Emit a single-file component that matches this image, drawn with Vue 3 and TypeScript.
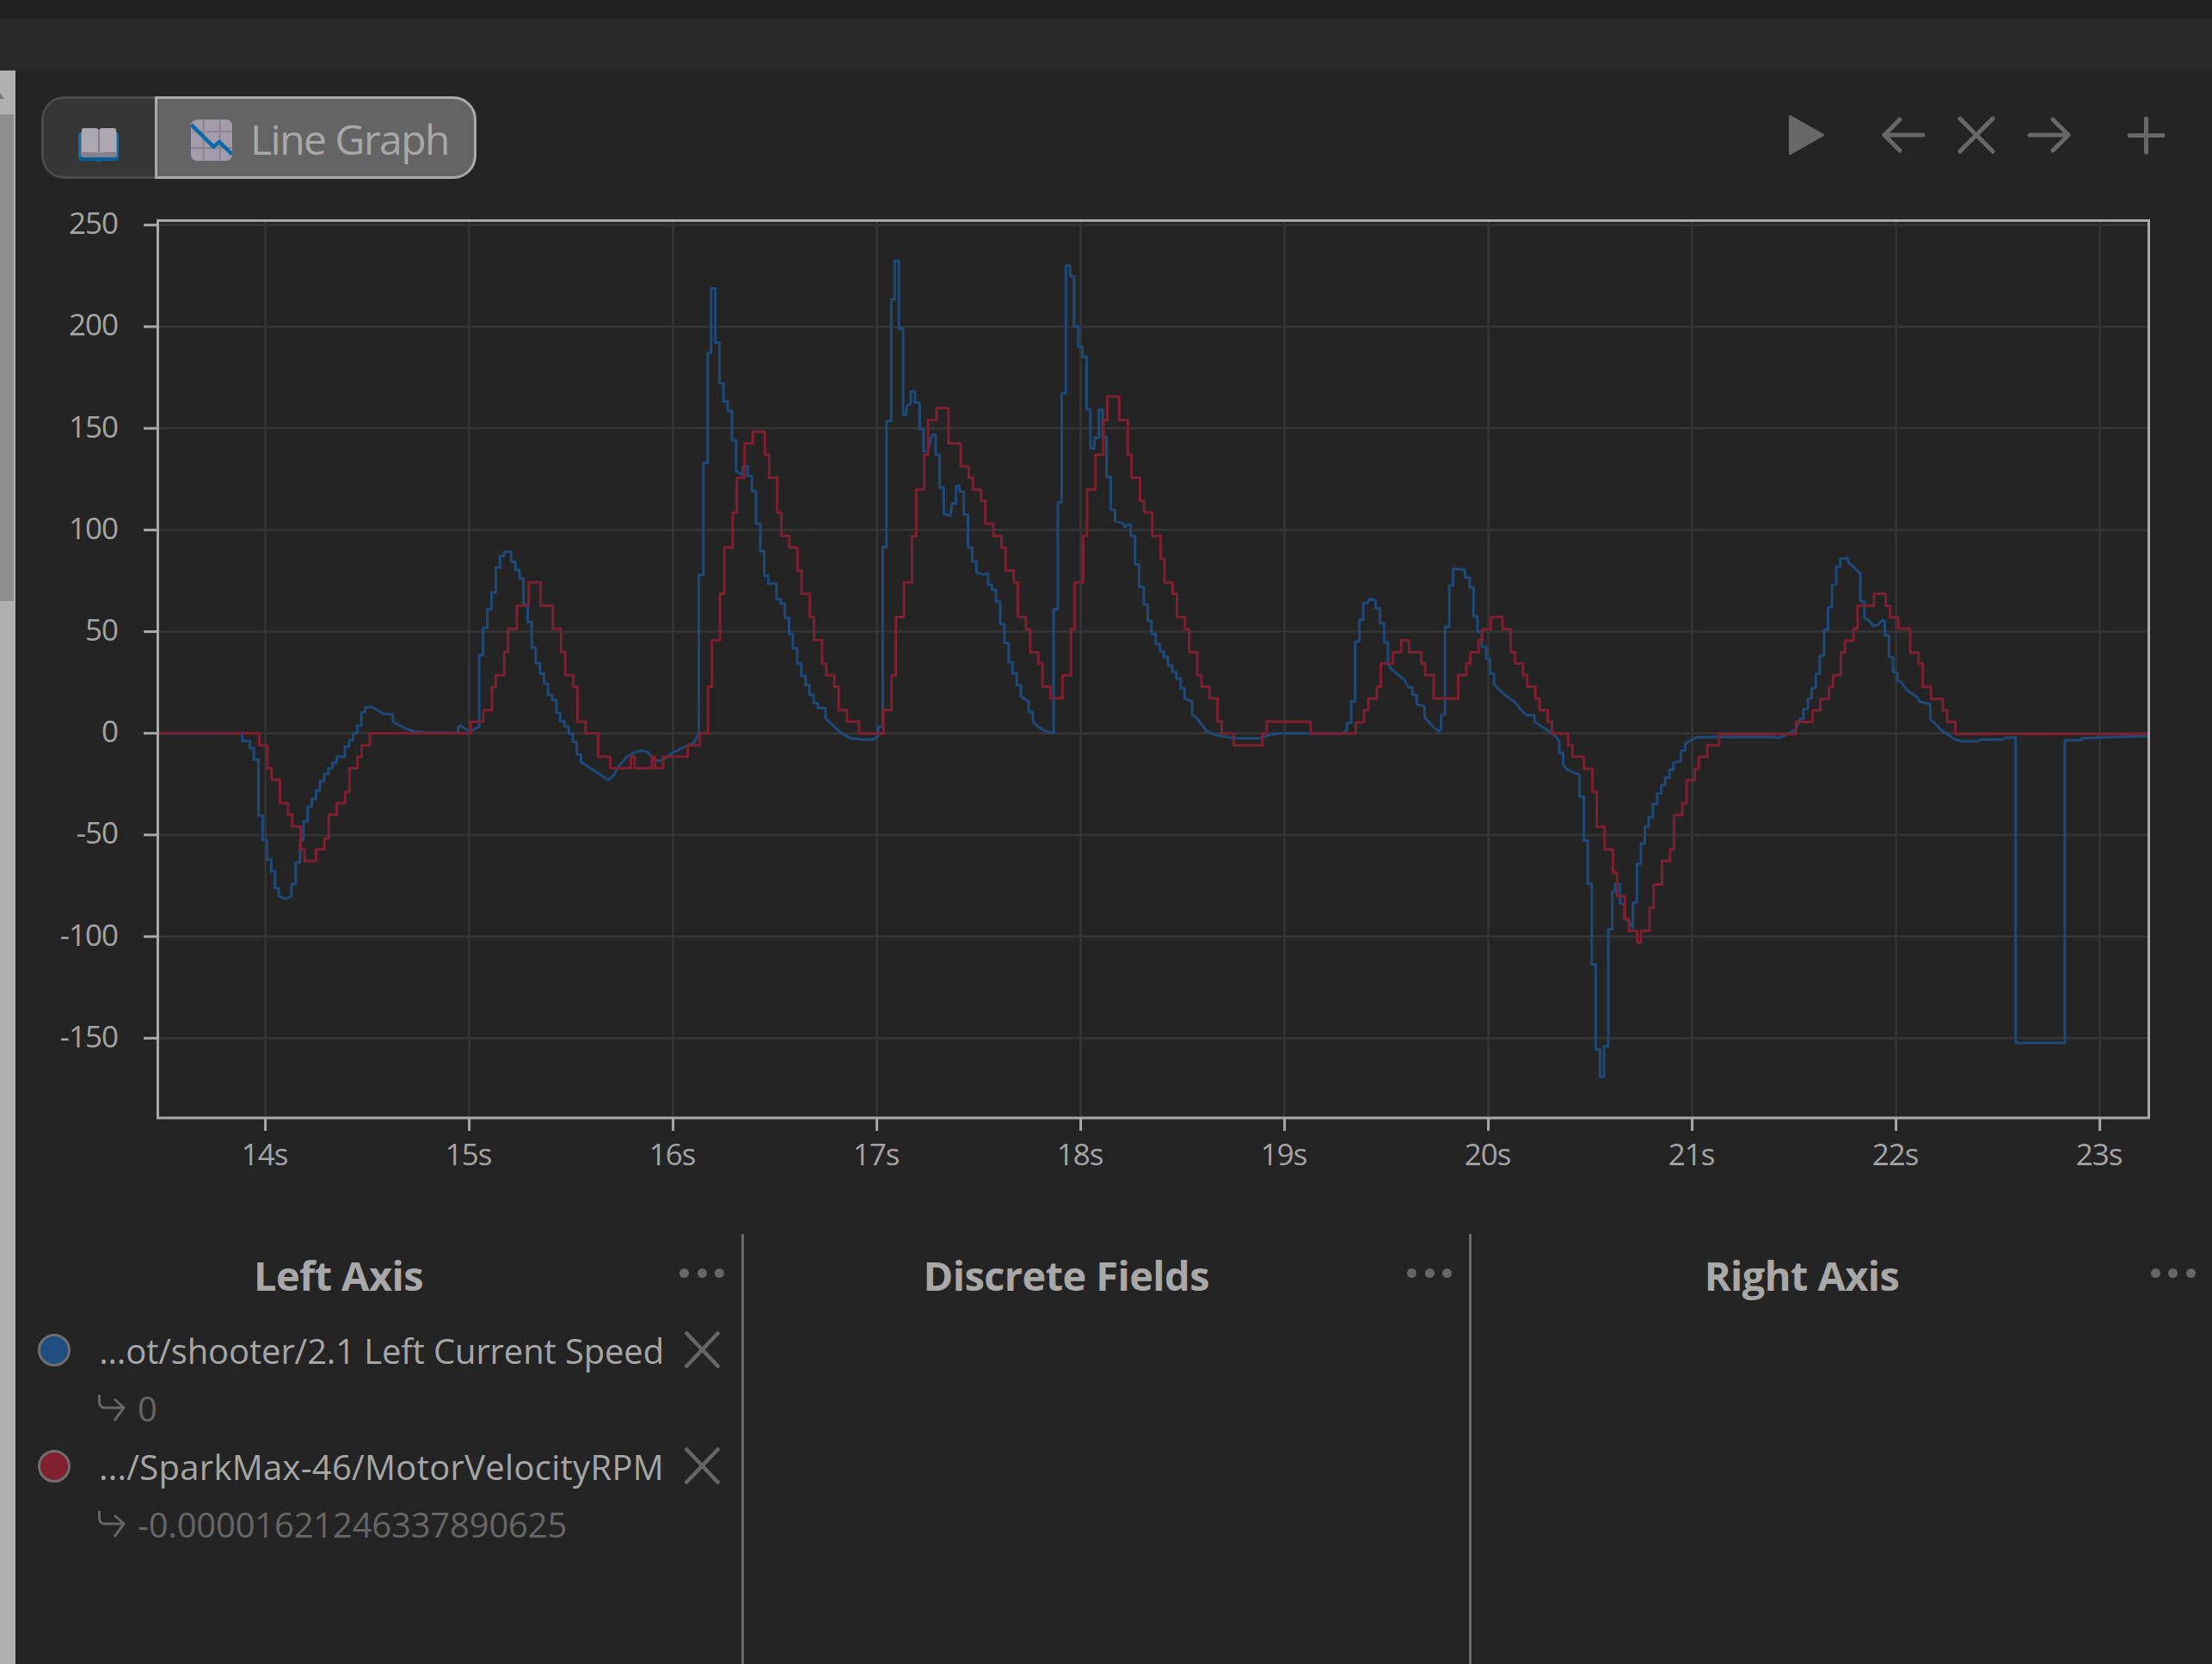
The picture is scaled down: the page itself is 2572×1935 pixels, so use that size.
<script setup lang="ts">
interface Section {
  x0: number
  y0: number
  sx: number
  sy: number
  pts: number[]
}

interface Series {
  name: string
  value: string
  color: string
  tracking: string
}

// traced in four windows, each with its own scale, so the numbers stay readable
const windows = {
  a: { x0: 180, y0: 640, sx: 2.24, sy: 3 },
  b: { x0: 780, y0: 280, sx: 2.24, sy: 2.613 },
  c: { x0: 1480, y0: 640, sx: 2.613, sy: 2.45 },
  d: { x0: 2000, y0: 620, sx: 2.741, sy: 2.45 }
}

const blueSections: Section[] = [
  { ...windows.a, pts: [10,638, 228,638, 228,665, 248,665, 248,690, 258,690, 258,730, 270,730, 270,925, 281,925, 281,1010, 292,1010, 292,1078, 303,1078, 303,1120, 313,1120, 313,1178, 323,1178, 323,1205, 340,1217, 356,1205, 356,1165, 367,1165, 367,1090, 378,1090, 378,1010, 387,1010, 387,945, 398,945, 398,895, 409,895, 409,868, 420,868, 420,838, 430,838, 430,805, 441,805, 441,780, 452,780, 452,760, 463,760, 463,740, 474,740, 474,720, 495,720, 495,685, 506,685, 506,662, 516,662, 516,638, 527,638, 527,612, 538,612, 538,565, 548,565, 548,548, 565,545, 595,570, 620,572, 620,598, 640,612, 660,625, 680,632, 710,636, 790,636, 790,615, 797,612, 810,625, 823,630, 845,615, 845,365, 855,365, 855,270, 866,270, 866,205, 877,205, 877,147, 888,147, 888,60, 899,60, 899,20, 910,20, 910,5, 928,5, 928,40, 939,40, 939,68, 950,68, 950,98, 960,98, 960,187, 971,187, 971,250, 982,250, 982,340, 992,340, 992,393, 1003,393, 1003,430, 1014,430, 1014,465, 1024,465, 1024,505, 1035,505, 1035,522, 1046,522, 1046,567, 1056,567, 1056,595, 1067,595, 1067,615, 1078,615, 1078,640, 1089,640, 1089,668, 1099,668, 1099,712, 1110,712, 1110,738, 1180,800, 1195,785, 1210,750, 1230,720, 1250,705, 1270,698, 1285,705, 1300,730, 1315,735, 1330,725, 1350,705, 1385,682, 1405,670, 1417,640] },
  { ...windows.b, pts: [73,1497, 73,1015, 85,1015, 85,675, 96,675, 96,340, 105,340, 105,145, 116,145, 116,310, 127,310, 127,433, 137,433, 137,488, 148,488, 148,517, 159,517, 159,607, 170,607, 170,700, 188,712, 188,685, 200,685, 200,715, 211,715, 211,760, 222,760, 222,860, 233,860, 233,943, 243,943, 243,1018, 254,1018, 254,1042, 275,1042, 275,1088, 286,1088, 286,1102, 297,1102, 297,1145, 308,1145, 308,1195, 318,1195, 318,1238, 329,1238, 329,1285, 340,1285, 340,1322, 351,1322, 351,1350, 361,1350, 361,1380, 372,1380, 372,1405, 383,1405, 383,1420, 403,1420, 403,1450, 420,1470, 445,1497, 470,1512, 500,1516, 530,1514, 540,1505, 540,1478, 552,1475, 552,930, 562,930, 562,548, 574,548, 574,178, 583,178, 583,60, 594,60, 594,267, 605,267, 605,528, 612,530, 616,500, 625,495, 625,458, 636,458, 636,492, 648,492, 648,572, 658,572, 658,640, 670,640, 680,590, 690,590, 690,650, 700,650, 700,750, 711,750, 711,830, 728,835, 733,798, 743,798, 743,745, 752,745, 752,762, 763,762, 763,832, 774,832, 774,932, 785,932, 785,975, 796,975, 796,1008, 815,1015, 826,1010, 826,1045, 836,1045, 836,1060, 847,1060, 847,1097, 858,1097, 858,1165, 869,1165, 869,1222, 880,1222, 880,1280, 890,1280, 890,1315, 901,1315, 901,1350, 912,1350, 912,1385, 932,1400, 932,1432, 943,1432, 943,1460, 955,1475, 975,1490, 997,1495, 997,1120, 1008,1120, 1008,795, 1018,795, 1018,463, 1029,463, 1029,75, 1040,75, 1040,108, 1050,108, 1050,260, 1061,260, 1061,322, 1072,322, 1072,352, 1083,352, 1083,513, 1093,513, 1093,630, 1102,632, 1104,598, 1115,598, 1115,513, 1125,513, 1125,595, 1135,595, 1135,718, 1146,718, 1146,818, 1157,818, 1157,852, 1178,858, 1182,870, 1190,862, 1198,862, 1198,897, 1209,897, 1209,983, 1220,983, 1220,1052, 1232,1052, 1232,1105, 1242,1105, 1242,1155, 1252,1155, 1252,1195, 1263,1195, 1263,1225, 1274,1225, 1274,1248, 1284,1248, 1284,1265, 1295,1265, 1295,1290, 1306,1290, 1306,1310, 1317,1310, 1317,1330, 1328,1330, 1328,1360, 1338,1360, 1338,1390, 1358,1400, 1358,1440, 1370,1450, 1395,1490, 1420,1502, 1470,1512, 1535,1512, 1568,1497] },
  { ...windows.c, pts: [0,525, 20,521, 210,521, 225,512, 225,492, 238,492, 238,430, 250,430, 250,260, 263,260, 263,198, 275,198, 275,150, 287,150, 295,138, 312,142, 312,165, 325,165, 325,207, 338,207, 338,263, 350,263, 350,322, 360,338, 375,350, 400,370, 412,390, 424,390, 424,412, 437,412, 437,438, 461,445, 461,475, 475,490, 490,505, 505,515, 511,510, 511,470, 523,468, 523,218, 536,218, 536,100, 548,100, 548,52, 583,55, 585,78, 598,78, 598,105, 610,105, 610,188, 622,188, 622,232, 635,232, 635,275, 648,275, 648,308, 660,308, 660,350, 672,350, 672,380, 685,395, 710,415, 735,432, 750,450, 770,470, 795,470, 795,488, 830,510, 860,530, 870,545, 870,577, 882,577, 882,612, 895,625, 932,640, 932,702, 945,702, 945,827, 957,827, 957,950, 969,950, 969,1180, 981,1180, 981,1422, 994,1422, 994,1500, 1006,1500, 1006,1413, 1019,1413, 1019,1080, 1031,1080, 1031,972, 1040,972, 1040,950, 1055,950, 1055,1005, 1068,1010, 1068,1050, 1080,1055, 1094,1075, 1094,1003, 1106,1003, 1106,893, 1118,893, 1118,835, 1130,835, 1130,787, 1142,787, 1142,760, 1155,760, 1155,722, 1168,722, 1168,692, 1180,692, 1180,668, 1192,668, 1192,648, 1205,648, 1205,625, 1217,625, 1217,605, 1240,600, 1240,570, 1253,570, 1253,552, 1268,542, 1290,532, 1359,532] },
  { ...windows.d, pts: [0,581, 175,581, 185,584, 210,575, 240,560, 255,530, 266,528, 266,502, 280,500, 280,472, 292,470, 292,442, 305,440, 305,402, 318,400, 318,350, 331,348, 331,275, 344,275, 344,212, 357,210, 357,148, 370,146, 370,97, 383,95, 383,73, 407,71, 410,85, 425,95, 435,105, 447,115, 447,193, 460,195, 460,240, 475,250, 490,265, 505,260, 518,247, 525,250, 525,290, 538,292, 538,352, 551,354, 551,395, 565,397, 565,420, 578,425, 595,447, 630,468, 635,480, 670,487, 670,530, 685,542, 710,565, 750,588, 770,593, 820,593, 830,588, 900,588, 910,583, 942,582, 942,1452, 1099,1452, 1099,590, 1150,590, 1152,585, 1210,582, 1365,578] }
]

const redSections: Section[] = [
  { ...windows.a, pts: [10,638, 272,638, 272,680, 293,680, 293,760, 304,760, 304,800, 326,800, 326,882, 347,882, 347,922, 358,922, 358,963, 380,963, 380,1043, 390,1043, 390,1084, 420,1084, 420,1043, 442,1043, 442,1004, 453,1004, 453,922, 474,922, 474,882, 496,882, 496,842, 507,842, 507,760, 528,760, 528,720, 539,720, 539,680, 560,680, 560,638, 823,638, 823,598, 856,598, 856,558, 878,558, 878,477, 888,477, 888,436, 910,436, 910,354, 920,354, 920,274, 943,274, 943,193, 974,193, 974,112, 1005,112, 1005,193, 1037,193, 1037,274, 1058,274, 1058,354, 1069,354, 1069,436, 1090,436, 1090,477, 1101,477, 1101,598, 1122,598, 1122,638, 1155,638, 1155,720, 1186,720, 1186,760, 1240,760, 1240,720, 1250,720, 1250,760, 1295,760, 1295,720, 1303,720, 1303,760, 1324,760, 1324,720, 1388,720, 1388,680, 1420,680, 1420,638, 1442,638] },
  { ...windows.b, pts: [97,1497, 97,1355, 107,1355, 107,1214, 128,1214, 128,1073, 139,1073, 139,932, 161,932, 161,826, 172,826, 172,720, 192,720, 192,615, 214,615, 214,580, 245,580, 245,650, 256,650, 256,720, 277,720, 277,826, 288,826, 288,897, 309,897, 309,932, 330,932, 330,1002, 341,1002, 341,1073, 362,1073, 362,1143, 373,1143, 373,1214, 394,1214, 394,1285, 405,1285, 405,1320, 426,1320, 426,1355, 437,1355, 437,1426, 459,1426, 459,1461, 490,1461, 490,1497, 554,1497, 554,1426, 575,1426, 575,1320, 586,1320, 586,1143, 607,1143, 607,1038, 628,1038, 628,897, 639,897, 639,756, 660,756, 660,650, 670,650, 670,545, 692,545, 692,508, 723,508, 723,615, 755,615, 755,685, 776,685, 776,720, 787,720, 787,756, 808,756, 808,790, 819,790, 819,860, 840,860, 840,897, 861,897, 861,932, 872,932, 872,1002, 893,1002, 893,1038, 904,1038, 904,1143, 925,1143, 925,1180, 936,1180, 936,1250, 957,1250, 957,1285, 968,1285, 968,1355, 989,1355, 989,1390, 1020,1390, 1020,1320, 1042,1320, 1042,1180, 1052,1180, 1052,1038, 1074,1038, 1074,897, 1084,897, 1084,756, 1106,756, 1106,650, 1127,650, 1127,545, 1137,545, 1137,473, 1168,473, 1168,545, 1190,545, 1190,650, 1200,650, 1200,720, 1222,720, 1222,790, 1233,790, 1233,826, 1254,826, 1254,897, 1276,897, 1276,967, 1286,967, 1286,1038, 1307,1038, 1307,1073, 1318,1073, 1318,1143, 1339,1143, 1339,1180, 1350,1180, 1350,1250, 1371,1250, 1371,1320, 1382,1320, 1382,1355, 1403,1355, 1403,1390, 1424,1390, 1424,1461, 1435,1461, 1435,1497, 1466,1497, 1466,1533, 1541,1533, 1541,1497, 1552,1497, 1552,1461, 1568,1461] },
  { ...windows.c, pts: [0,488, 115,488, 115,522, 252,522, 252,490, 277,490, 277,455, 290,455, 290,422, 316,422, 316,388, 328,388, 328,322, 365,322, 365,290, 390,290, 390,256, 414,256, 414,290, 451,290, 451,322, 463,322, 463,355, 489,355, 489,422, 563,422, 563,355, 588,355, 588,322, 600,322, 600,290, 625,290, 625,256, 637,256, 637,224, 663,224, 663,190, 698,190, 698,224, 723,224, 723,290, 736,290, 736,322, 760,322, 760,355, 773,355, 773,388, 798,388, 798,422, 810,422, 810,455, 835,455, 835,488, 848,488, 848,522, 897,522, 897,555, 910,555, 910,588, 945,588, 945,622, 971,622, 971,688, 984,688, 984,787, 1008,787, 1008,852, 1033,852, 1033,918, 1046,918, 1046,985, 1070,985, 1070,1050, 1082,1050, 1082,1084, 1107,1084, 1107,1118, 1118,1118, 1118,1084, 1145,1084, 1145,1018, 1157,1018, 1157,952, 1182,952, 1182,885, 1207,885, 1207,852, 1219,852, 1219,754, 1244,754, 1244,720, 1257,720, 1257,655, 1282,655, 1282,622, 1294,622, 1294,588, 1320,588, 1320,555, 1356,555, 1356,522] },
  { ...windows.d, pts: [1,572, 242,572, 242,538, 295,538, 295,505, 320,505, 320,472, 347,472, 347,438, 360,438, 360,405, 385,405, 385,340, 398,340, 398,306, 425,306, 425,272, 438,272, 438,207, 490,207, 490,173, 528,173, 528,207, 542,207, 542,240, 568,240, 568,272, 606,272, 606,340, 632,340, 632,372, 646,372, 646,438, 672,438, 672,472, 710,472, 710,505, 724,505, 724,538, 750,538, 750,572, 1365,572] }
]

const toPath = (sections: Section[]) => {
  const out: string[] = []
  for (const s of sections) {
    for (let i = 0; i < s.pts.length; i += 2) {
      const x = s.x0 + s.pts[i] / s.sx
      const y = s.y0 + s.pts[i + 1] / s.sy
      out.push(`${out.length ? 'L' : 'M'}${x.toFixed(1)} ${y.toFixed(1)}`)
    }
  }
  return out.join(' ')
}

const bluePath = toPath(blueSections)
const redPath = toPath(redSections)

// chart scale, page pixels
const yFor = (v: number) => 852.7 - v * 2.364
const xFor = (t: number) => 308.6 + (t - 14) * 237

const yTicks = [250, 200, 150, 100, 50, 0, -50, -100, -150].map((v) => ({ label: String(v), y: yFor(v) }))
const xTicks = [14, 15, 16, 17, 18, 19, 20, 21, 22, 23].map((t) => ({ label: `${t}s`, x: xFor(t) }))

const leftSeries: Series[] = [
  { name: '...ot/shooter/2.1 Left Current Speed', value: '0', color: '#1f4e80', tracking: '-0.14px' },
  { name: '.../SparkMax-46/MotorVelocityRPM', value: '-0.00001621246337890625', color: '#822030', tracking: '0.28px' }
]

const panels = [
  { title: 'Left Axis', series: leftSeries },
  { title: 'Discrete Fields', series: [] as Series[] },
  { title: 'Right Axis', series: [] as Series[] }
]
</script>

<template>
  <div class="app">
    <div class="top-strip"></div>
    <div class="title-bar"></div>
    <div class="main">
      <div class="scrollbar">
        <div class="scroll-arrow"></div>
        <div class="scroll-thumb"></div>
      </div>

      <div class="content">
        <div class="tab-row">
          <div class="tabs">
            <div class="tab tab-docs">
              <svg width="48" height="41" viewBox="0 0 48 41">
                <rect x="0" y="6" width="47" height="33" rx="3" fill="#0a72b4" />
                <rect x="0" y="34" width="47" height="5" rx="2" fill="#075f98" />
                <circle cx="24" cy="37" r="3.5" fill="#075f98" />
                <rect x="3" y="4" width="42" height="31" rx="3" fill="#86808c" />
                <path d="M4 3Q4 1 6 1H20Q24 1 24 5V31Q22 29 18 29H4Z" fill="#aca7b1" />
                <path d="M44 3Q44 1 42 1H28Q24 1 24 5V31Q26 29 30 29H44Z" fill="#aca7b1" />
                <rect x="23" y="4" width="2" height="28" fill="#86808c" />
              </svg>
            </div>
            <div class="tab tab-active">
              <svg class="tab-icon" width="48" height="48" viewBox="0 0 48 48">
                <rect width="48" height="48" rx="7" fill="#a39cab" />
                <path d="M14.7 0V48M33.7 0V48M0 14H48M0 33H48" stroke="#8a8392" stroke-width="2" fill="none" />
                <path d="M0.5 6L26.3 31.7L33 26L48 40.3" stroke="#0a6aa8" stroke-width="4.5" fill="none" />
              </svg>
              <span class="tab-label">Line Graph</span>
            </div>
          </div>

          <div class="tab-controls">
            <svg class="ctl-play" width="41" height="46" viewBox="0 0 41 46">
              <path d="M1.5 1.5L39.5 23L1.5 44.5Z" fill="#686868" stroke="#686868" stroke-width="3" stroke-linejoin="round" />
            </svg>
            <svg class="ctl-back" width="51" height="42" viewBox="0 0 51 42">
              <path d="M21 3L3 21L21 39M3 21H48" class="ctl-stroke" />
            </svg>
            <svg class="ctl-close" width="44" height="44" viewBox="0 0 44 44">
              <path d="M3 3L41 41M41 3L3 41" class="ctl-stroke" />
            </svg>
            <svg class="ctl-forward" width="51" height="42" viewBox="0 0 51 42">
              <path d="M30 3L48 21L30 39M48 21H3" class="ctl-stroke" />
            </svg>
            <svg class="ctl-add" width="45" height="45" viewBox="0 0 45 45">
              <path d="M22.5 3V42M3 22.5H42" class="ctl-stroke" />
            </svg>
          </div>
        </div>

        <!-- viewBox uses page coordinates, the svg starts at 18,207 -->
        <svg class="chart" width="2554" height="1228" viewBox="18 207 2554 1228">
          <g class="grid">
            <line v-for="t in yTicks" :key="t.label" x1="184" x2="2498" :y1="t.y" :y2="t.y" />
            <line v-for="t in xTicks" :key="t.label" :x1="t.x" :x2="t.x" y1="257" y2="1299" />
          </g>
          <path class="trace" :d="bluePath" stroke="#1e4a7a" />
          <path class="trace" :d="redPath" stroke="#7f2030" />
          <g class="axis">
            <rect x="183.5" y="256.5" width="2315" height="1043.5" fill="none" />
            <line v-for="t in yTicks" :key="t.label" x1="167" x2="183" :y1="t.y" :y2="t.y" />
            <line v-for="t in xTicks" :key="t.label" :x1="t.x" :x2="t.x" y1="1300" y2="1315" />
          </g>
          <text
            v-for="t in yTicks"
            :key="t.label"
            class="tick-label"
            x="137"
            :y="t.y + 10.5"
            text-anchor="end"
          >{{ t.label }}</text>
          <text
            v-for="t in xTicks"
            :key="t.label"
            class="tick-label"
            :x="t.x - 1"
            y="1355"
            text-anchor="middle"
          >{{ t.label }}</text>
        </svg>

        <div class="panels">
          <div v-for="panel in panels" :key="panel.title" class="panel">
            <div class="panel-head">
              <div class="panel-title">{{ panel.title }}</div>
              <div class="panel-dots"><i></i><i></i><i></i></div>
            </div>
            <div v-for="s in panel.series" :key="s.name" class="legend-item">
              <div class="legend-row">
                <span class="legend-dot" :style="{ background: s.color }"></span>
                <span class="legend-name" :style="{ letterSpacing: s.tracking }">{{ s.name }}</span>
                <svg class="legend-remove" width="43" height="43" viewBox="0 0 43 43">
                  <path d="M2 1L41 42M41 1L2 42" />
                </svg>
              </div>
              <div class="legend-value">
                <svg width="32" height="32" viewBox="0 0 32 32">
                  <path d="M1.5 0V8Q1.5 15 8 15H30M19 5L30 15L19 30" />
                </svg>
                <span>{{ s.value }}</span>
              </div>
            </div>
          </div>
        </div>
      </div>
    </div>
  </div>
</template>

<style scoped>
.app {
  width: 2572px;
  height: 1935px;
  display: flex;
  flex-direction: column;
  overflow: hidden;
  background: #242424;
  font-family: "Open Sans", "Noto Sans", sans-serif;
  color: #a8a8a8;
}

.top-strip {
  height: 22px;
  background: #222222;
}

.title-bar {
  height: 60px;
  background: #28292b;
}

.main {
  flex: 1;
  display: flex;
  min-height: 0;
}

.scrollbar {
  width: 18px;
  flex-shrink: 0;
  padding-top: 26px;
  box-sizing: border-box;
  background: #b0b0b0;
}

.scroll-arrow {
  width: 5px;
  height: 7px;
  margin-bottom: 18px;
  background: #777777;
  clip-path: polygon(0 0, 100% 100%, 0 100%);
}

.scroll-thumb {
  width: 16px;
  height: 566px;
  background: #8f8f8f;
}

.content {
  flex: 1;
  min-width: 0;
  display: flex;
  flex-direction: column;
}

.tab-row {
  height: 125px;
  padding: 30px 54px 0 30px;
  box-sizing: border-box;
  display: flex;
  justify-content: space-between;
}

.tabs {
  display: flex;
  height: 96px;
}

.tab {
  display: flex;
  align-items: center;
  box-sizing: border-box;
  border-style: solid;
  border-width: 3px;
}

.tab-docs {
  width: 132px;
  padding: 16px 0 0 40px;
  background: #363636;
  border-color: #4a4a4a;
  border-right: none;
  border-radius: 27px 0 0 27px;
}

.tab-active {
  width: 373.5px;
  padding: 0 0 0 39px;
  background: #646464;
  border-color: #aaaaaa;
  border-radius: 0 27px 27px 0;
}

.tab-icon {
  margin-top: 5px;
}

.tab-label {
  margin-top: 3px;
  margin-left: 21px;
  font-size: 48px;
  letter-spacing: -1.5px;
  line-height: 1;
}

.tab-controls {
  display: flex;
  align-items: center;
  height: 90px;
}

.ctl-play {
  margin-right: 67px;
}

.ctl-back {
  margin-right: 37px;
}

.ctl-close {
  margin-right: 37px;
}

.ctl-forward {
  margin-right: 65px;
}

.ctl-stroke {
  fill: none;
  stroke: #686868;
  stroke-width: 5;
  stroke-linecap: round;
  stroke-linejoin: round;
}

.chart {
  display: block;
  flex-shrink: 0;
  width: 2554px;
  height: 1228px;
}

.grid line {
  stroke: #363636;
  stroke-width: 2.5;
}

.trace {
  fill: none;
  stroke-width: 3;
  stroke-linejoin: round;
}

.axis rect,
.axis line {
  stroke: #a9a9a9;
  stroke-width: 3;
}

.tick-label {
  font-size: 35px;
  letter-spacing: -1px;
  fill: #a4a4a4;
}

.panels {
  flex: 1;
  display: grid;
  grid-template-columns: 846.5px 846px 1fr;
  min-height: 0;
}

.panel {
  padding-top: 18px;
  box-sizing: border-box;
  border-right: 3px solid #6a6a6a;
}

.panel:last-child {
  border-right: none;
}

.panel-head {
  display: flex;
  align-items: center;
  height: 60px;
  padding-right: 19.5px;
  margin-bottom: 27px;
}

.panel-title {
  flex: 1;
  margin-right: 21px;
  text-align: center;
  font-size: 47px;
  font-weight: 700;
  letter-spacing: -0.6px;
  line-height: 60px;
}

.panel-dots {
  display: flex;
  gap: 9.5px;
  margin-top: -6px;
}

.panel-dots i {
  display: block;
  width: 11px;
  height: 11px;
  border-radius: 50%;
  background: #666666;
}

.legend-row {
  display: flex;
  align-items: center;
  height: 60px;
  padding-left: 26px;
}

.legend-dot {
  width: 38px;
  height: 38px;
  box-sizing: border-box;
  border: 3px solid #6e6e6e;
  border-radius: 50%;
  flex-shrink: 0;
}

.legend-name {
  width: 665px;
  margin: 0 23px 0 25px;
  white-space: nowrap;
  text-align: right;
  font-size: 40px;
  color: #a6a6a6;
}

.legend-remove {
  flex-shrink: 0;
  margin-top: -2px;
}

.legend-remove path {
  fill: none;
  stroke: #666666;
  stroke-width: 4.5;
}

.legend-value {
  display: flex;
  align-items: center;
  height: 75px;
  padding-left: 96px;
  gap: 14px;
  font-size: 40px;
  letter-spacing: -0.2px;
  color: #666666;
}

.legend-value path {
  fill: none;
  stroke: #666666;
  stroke-width: 3;
}
</style>

<style>
html,
body {
  margin: 0;
  background: #242424;
}
</style>
